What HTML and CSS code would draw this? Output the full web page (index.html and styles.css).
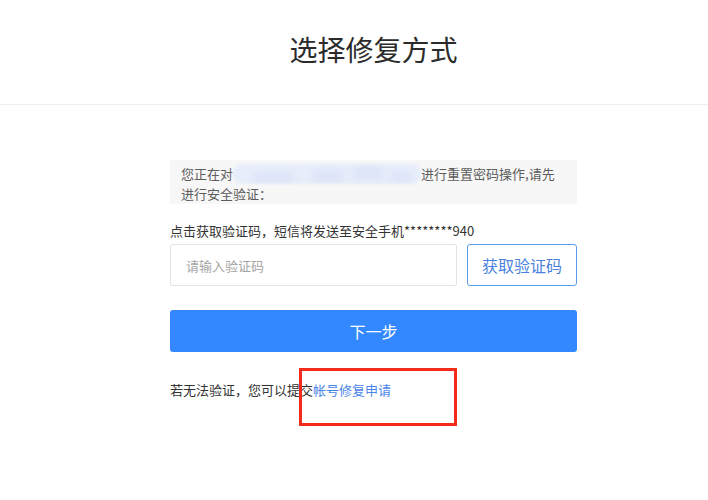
FILE: index.html
```html
<!DOCTYPE html>
<html lang="zh-CN">
<head>
<meta charset="utf-8">
<title>选择修复方式</title>
<link rel="stylesheet" href="styles.css">
</head>
<body>
<header class="header">
  <div class="column">
    <h1 class="title">选择修复方式</h1>
  </div>
</header>
<main class="column main">
  <div class="notice">
    <p class="notice-text">您正在对<span class="mask" aria-hidden="true"><span class="m1"></span><span class="m2"></span><span class="m3"></span><span class="m4"></span></span>进行重置密码操作,请先进行安全验证：</p>
  </div>
  <p class="label">点击获取验证码，短信将发送至安全手机********940</p>
  <div class="code-row">
    <input class="code-input" type="text" placeholder="请输入验证码">
    <button class="code-btn" type="button">获取验证码</button>
  </div>
  <button class="next-btn" type="button">下一步</button>
  <div class="footer-row">
    <p class="help">若无法验证，您可以提交<a class="link" href="#">帐号修复申请</a></p>
    <div class="highlight"></div>
  </div>
</main>
</body>
</html>
```
FILE: styles.css
```css
* { box-sizing: border-box; }
html, body { margin: 0; padding: 0; background: #fff; }
body {
  font-family: "Noto Sans CJK SC", "Microsoft YaHei", sans-serif;
  color: #333;
  min-height: 500px;
}
.column {
  width: 407px;
  margin-left: 170px;
}
.header {
  height: 105px;
  border-bottom: 1px solid #efefef;
  box-shadow: 0 2px 3px rgba(0,0,0,0.015);
}
.title {
  margin: 0;
  padding-top: 29px;
  text-align: center;
  font-size: 28px;
  font-weight: 400;
  line-height: 40px;
  color: #2b2b2b;
}
.main {
  padding-top: 55px;
}
.notice {
  background: #f7f7f7;
  height: 44px;
  padding: 4px 11px 0 11px;
}
.notice-text {
  margin: 0;
  font-size: 13px;
  line-height: 19px;
  color: #5c5c5c;
}
.mask {
  position: relative;
  display: inline-block;
  width: 188px;
  height: 20px;
  vertical-align: -5px;
  background: #e7edfa;
  border-radius: 8px;
  filter: blur(1.5px);
  overflow: hidden;
}
.mask span {
  position: absolute;
  background: #dce4f7;
  filter: blur(3px);
}
.mask .m1 { left: 20px; top: 9px; width: 40px; height: 10px; }
.mask .m2 { left: 80px; top: 7px; width: 30px; height: 11px; }
.mask .m3 { left: 120px; top: 3px; width: 30px; height: 12px; }
.mask .m4 { left: 158px; top: 8px; width: 20px; height: 10px; }
.label {
  margin: 17px 0 0 0;
  font-size: 13px;
  line-height: 19px;
  color: #333;
}
.code-row {
  display: flex;
  gap: 10px;
  margin-top: 4px;
}
.code-input {
  width: 287px;
  height: 42px;
  border: 1px solid #e3e3e3;
  border-radius: 2px;
  padding: 0 15px;
  font-family: inherit;
  font-size: 13px;
  color: #333;
  outline: none;
}
.code-input::placeholder { color: #a5a5a5; }
.code-btn {
  width: 110px;
  height: 42px;
  border: 1px solid #5b9bf0;
  border-radius: 3px;
  background: #fff;
  color: #4b82dc;
  font-family: inherit;
  font-size: 16px;
  padding: 0;
}
.next-btn {
  display: block;
  width: 407px;
  height: 42px;
  margin-top: 24px;
  border: none;
  border-radius: 3px;
  background: #3388ff;
  color: #fff;
  font-family: inherit;
  font-size: 16px;
  padding: 0;
}
.footer-row {
  position: relative;
  margin-top: 28px;
  padding-bottom: 50px;
}
.help {
  margin: 0;
  font-size: 13px;
  line-height: 19px;
  color: #333;
}
.link {
  color: #4a86e8;
  text-decoration: none;
}
.highlight {
  position: absolute;
  left: 129px;
  top: -12px;
  width: 158px;
  height: 58px;
  border: 3px solid #f22b1b;
}
```
